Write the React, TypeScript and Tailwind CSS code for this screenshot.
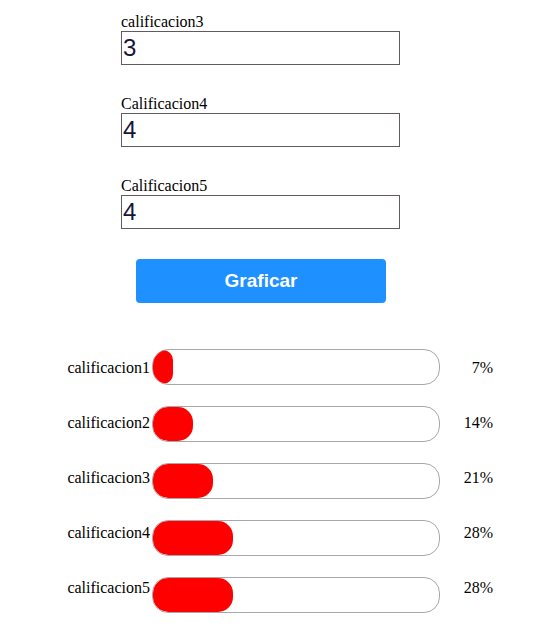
import React from "react";

const inputs = [
  { label: "calificacion3", value: "3" },
  { label: "Calificacion4", value: "4" },
  { label: "Calificacion5", value: "4" },
];

const bars = [
  { label: "calificacion1", pct: 7 },
  { label: "calificacion2", pct: 14 },
  { label: "calificacion3", pct: 21 },
  { label: "calificacion4", pct: 28 },
  { label: "calificacion5", pct: 28 },
];

export default function App() {
  return (
    <div className="w-[560px] h-[632px] bg-white overflow-hidden text-black" style={{ fontFamily: '"Liberation Serif", "Times New Roman", serif' }}>
      <div className="pt-[13px] pl-[121px] flex flex-col gap-[30px]">
        {inputs.map((it) => (
          <div key={it.label} className="flex flex-col">
            <div className="text-[16px] leading-[18px] h-[18px]">{it.label}</div>
            <div
              className="w-[279px] h-[34px] border border-[#615b61] flex items-center pl-[1px] text-[24px] text-[#16163a]"
              style={{ fontFamily: '"Liberation Sans", Arial, sans-serif' }}
            >
              {it.value}
            </div>
          </div>
        ))}
      </div>
      <div className="pl-[136px] mt-[30px]">
        <div
          className="w-[250px] h-[44px] rounded-[4px] bg-[#1e90ff] text-white font-bold text-[19px] flex items-center justify-center"
          style={{ fontFamily: '"Liberation Sans", Arial, sans-serif' }}
        >
          Graficar
        </div>
      </div>
      <div className="mt-[46px] flex items-start">
        <div className="w-[150px] pt-[10px] flex flex-col gap-[37px] text-right text-[16px] leading-[18px]">
          {bars.map((b) => (
            <div key={b.label} className="h-[18px]">{b.label}</div>
          ))}
        </div>
        <div className="ml-[2px] flex flex-col gap-[21px]">
          {bars.map((b) => (
            <div key={b.label} className="w-[288px] h-[36px] rounded-[16px] border border-[#a8a8a8] overflow-hidden">
              <div className="h-full rounded-[15px] bg-[#ff0000]" style={{ width: `${(b.pct / 100) * 286}px` }} />
            </div>
          ))}
        </div>
        <div className="w-[53px] pt-[10px] flex flex-col gap-[37px] text-right text-[16px] leading-[18px]">
          {bars.map((b) => (
            <div key={b.label} className="h-[18px]">{b.pct}%</div>
          ))}
        </div>
      </div>
    </div>
  );
}
